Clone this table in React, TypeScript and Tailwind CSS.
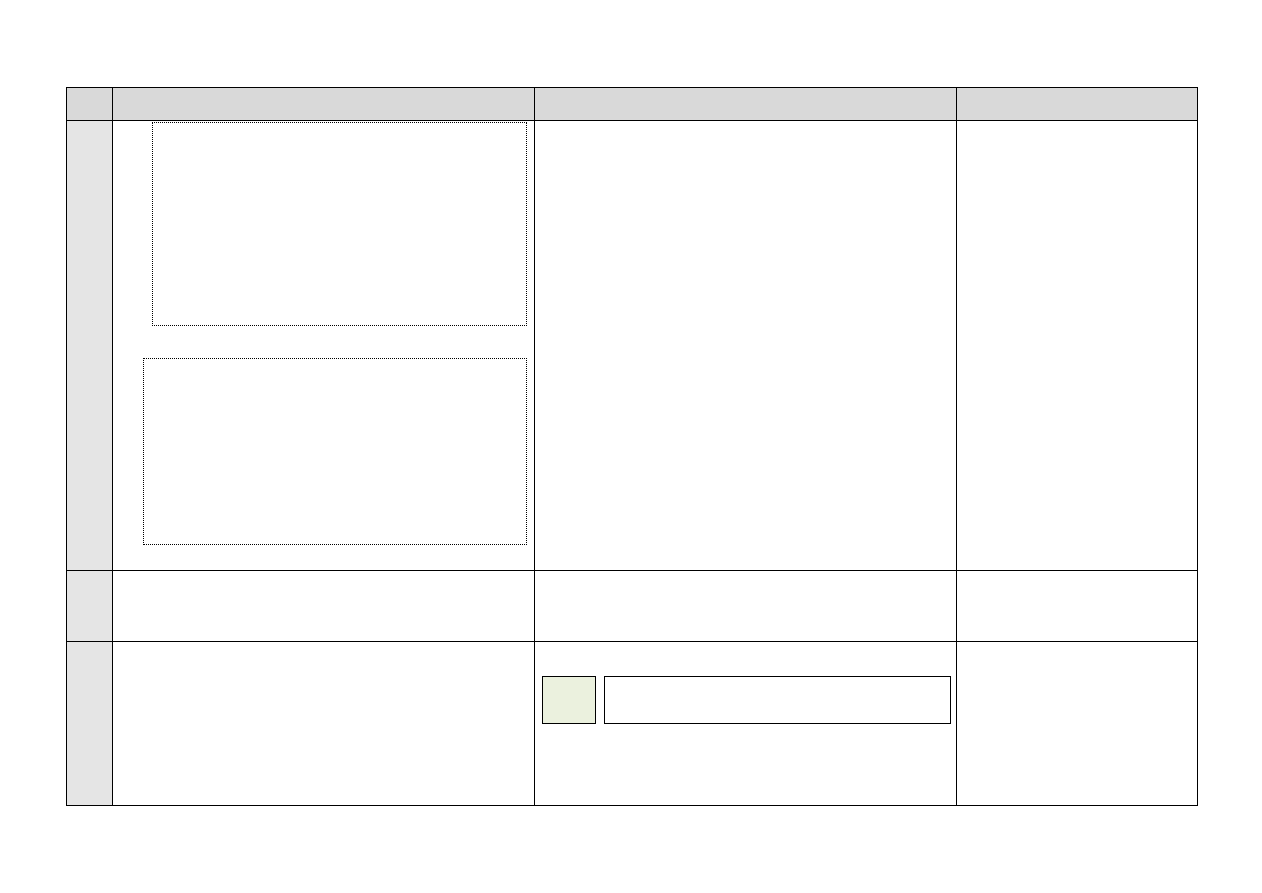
import React from 'react';

const App: React.FC = () => {
  return (
    <div className="min-h-[893px] w-full bg-white pt-[87px] pl-[66px]" style={{ fontFamily: '"Liberation Sans", Arial, sans-serif' }}>
      <div className="grid w-[1132px] grid-cols-[46px_422px_422px_241px] grid-rows-[33px_450px_71px_164px] border-l border-t border-black">
        {/* header */}
        <div className="border-b border-r border-black bg-[#d9d9d9]" />
        <div className="border-b border-r border-black bg-[#d9d9d9]" />
        <div className="border-b border-r border-black bg-[#d9d9d9]" />
        <div className="border-b border-r border-black bg-[#d9d9d9]" />

        {/* row 1 */}
        <div className="border-b border-r border-black bg-[#e5e5e5]" />
        <div className="flex flex-col border-b border-r border-black">
          <div className="ml-[39px] mt-px h-[204px] w-[375px] border border-dotted border-black" />
          <div className="ml-[30px] mt-[32px] h-[187px] w-[384px] border border-dotted border-black" />
        </div>
        <div className="border-b border-r border-black" />
        <div className="border-b border-r border-black" />

        {/* row 2 */}
        <div className="border-b border-r border-black bg-[#e5e5e5]" />
        <div className="border-b border-r border-black" />
        <div className="border-b border-r border-black" />
        <div className="border-b border-r border-black" />

        {/* row 3 */}
        <div className="border-b border-r border-black bg-[#e5e5e5]" />
        <div className="border-b border-r border-black" />
        <div className="flex items-start gap-[8px] border-b border-r border-black pl-[7px] pt-[34px]">
          <div className="h-[48px] w-[54px] border border-black bg-[#ebf1de]" />
          <div className="h-[48px] w-[347px] border border-black bg-white" />
        </div>
        <div className="border-b border-r border-black" />
      </div>
    </div>
  );
};

export default App;
